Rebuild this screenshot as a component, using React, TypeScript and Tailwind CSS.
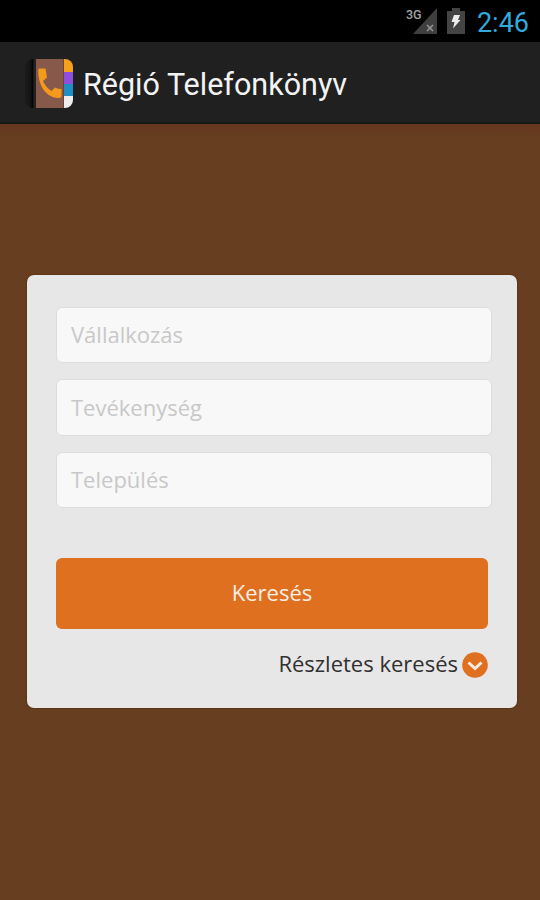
import { useState } from "react";

const fields = [
  { id: "company", label: "Vállalkozás" },
  { id: "activity", label: "Tevékenység" },
  { id: "city", label: "Település" },
];

const SignalIcon = () => (
  <svg width="32" height="30" viewBox="0 0 32 30" className="mr-[9px]">
    <path d="M31 2V28H7Z" fill="#3f3f3f" />
    <text x="0" y="13" fontSize="12.5" fontWeight="500" fontFamily="Roboto, sans-serif" fill="#a3a3a3">3G</text>
    <path d="M21 19l6 6M27 19l-6 6" stroke="#999999" strokeWidth="1.5" />
  </svg>
);

const BatteryIcon = () => (
  <svg width="18" height="27" viewBox="0 0 18 27" className="mr-[12px]">
    <path d="M5 0h8v3h5v23H0V3h5z" fill="#444444" />
    <path d="M7 7h6l-2 5h2.500L6 20.500l1.500-6.500H4.500z" fill="#ededed" />
  </svg>
);

const AppIcon = () => (
  <svg width="48" height="49" viewBox="0 0 48 49" className="mr-[10px]">
    <defs>
      <clipPath id="book">
        <rect width="48" height="49" rx="8" />
      </clipPath>
      <linearGradient id="spine">
        <stop offset="0" stopColor="#1c1c1c" />
        <stop offset="1" stopColor="#0c0c0c" />
      </linearGradient>
    </defs>
    <g clipPath="url(#book)">
      <rect width="11" height="49" fill="url(#spine)" />
      <rect x="6.500" width="2" height="49" fill="#060606" />
      <rect x="8.500" width="2.500" height="49" fill="#242220" />
      <rect x="11" width="29" height="49" fill="#87594a" />
      <rect x="39" width="9" height="13" fill="#f9a01b" />
      <rect x="39" y="13" width="9" height="12" fill="#8f4ee0" />
      <rect x="39" y="25" width="9" height="12" fill="#2090c4" />
      <rect x="39" y="37" width="9" height="12" fill="#eeeeee" />
      <rect x="38" width="1" height="49" fill="#6b4436" />
      <path d="M14.500 9.500H20.500L22 18.500L18 22C20 26.500 22.500 29.500 26.500 32L30 28.500Q33 30 36.500 30V37.500Q35.500 39 33 39C21 38 13.500 27.500 13.200 11.500Q13.200 9.500 14.500 9.500Z" fill="#f39a1c" />
    </g>
  </svg>
);

const App = () => {
  const [values, setValues] = useState<Record<string, string>>({});

  return (
    <div className="flex h-[900px] w-[540px] flex-col overflow-hidden bg-[#673f20] font-['Open_Sans',sans-serif]">
      {/* status bar */}
      <div className="flex h-[42px] shrink-0 items-center justify-end bg-black pr-[11px] font-[Roboto,sans-serif]">
        <SignalIcon />
        <BatteryIcon />
        <span className="pt-[5px] text-[27px] leading-none text-[#33a9dc]">2:46</span>
      </div>

      {/* action bar */}
      <header className="flex h-[82px] shrink-0 items-center border-b-2 border-[#171b17] bg-[#202020] pt-[3px] pl-[25px] font-[Roboto,sans-serif]">
        <AppIcon />
        <h1 className="pt-1 text-[30.5px] leading-none text-[#f3f3f3]">Régió Telefonkönyv</h1>
      </header>
      <div className="h-4 shrink-0 bg-linear-to-b from-[#65361f] to-[#673f20]" />

      <main className="mt-[134.5px] mr-[23px] ml-[27px] flex h-[433.5px] flex-col rounded-[7px] bg-[#e7e7e7] pt-8 pr-[25px] pl-[29px] shadow-[0_0_2px_#4a2508]">
        <div className="flex flex-col gap-4">
          {fields.map((field) => (
            <input
              key={field.id}
              value={values[field.id] ?? ""}
              onChange={(e) => setValues({ ...values, [field.id]: e.target.value })}
              placeholder={field.label}
              className="h-[56.5px] w-full rounded-[6px] border border-[#dddddd] bg-[#f8f8f8] px-[14px] pb-[1px] text-[22px] text-[#333333] outline-none placeholder:text-[#c8c8c8]"
            />
          ))}
        </div>
        <button className="mt-[50px] mr-[4px] h-[71px] shrink-0 rounded-[6px] bg-[#df7020] pb-[2px] text-[22px] text-[#fbeee4]">
          Keresés
        </button>
        <button className="mt-[21px] mr-[4px] flex items-center self-end text-[22px] text-[#303030]">
          <span className="-mt-[3px]">Részletes keresés</span>
          <svg width="26" height="26" viewBox="0 0 26 26" className="ml-[4px]">
            <circle cx="13" cy="13" r="12.800" fill="#df7020" />
            <path d="M6.500 10.500L13 16.500L19.500 10.500" fill="none" stroke="#f5ebe3" strokeWidth="3" />
          </svg>
        </button>
      </main>
    </div>
  );
};

export default App;
